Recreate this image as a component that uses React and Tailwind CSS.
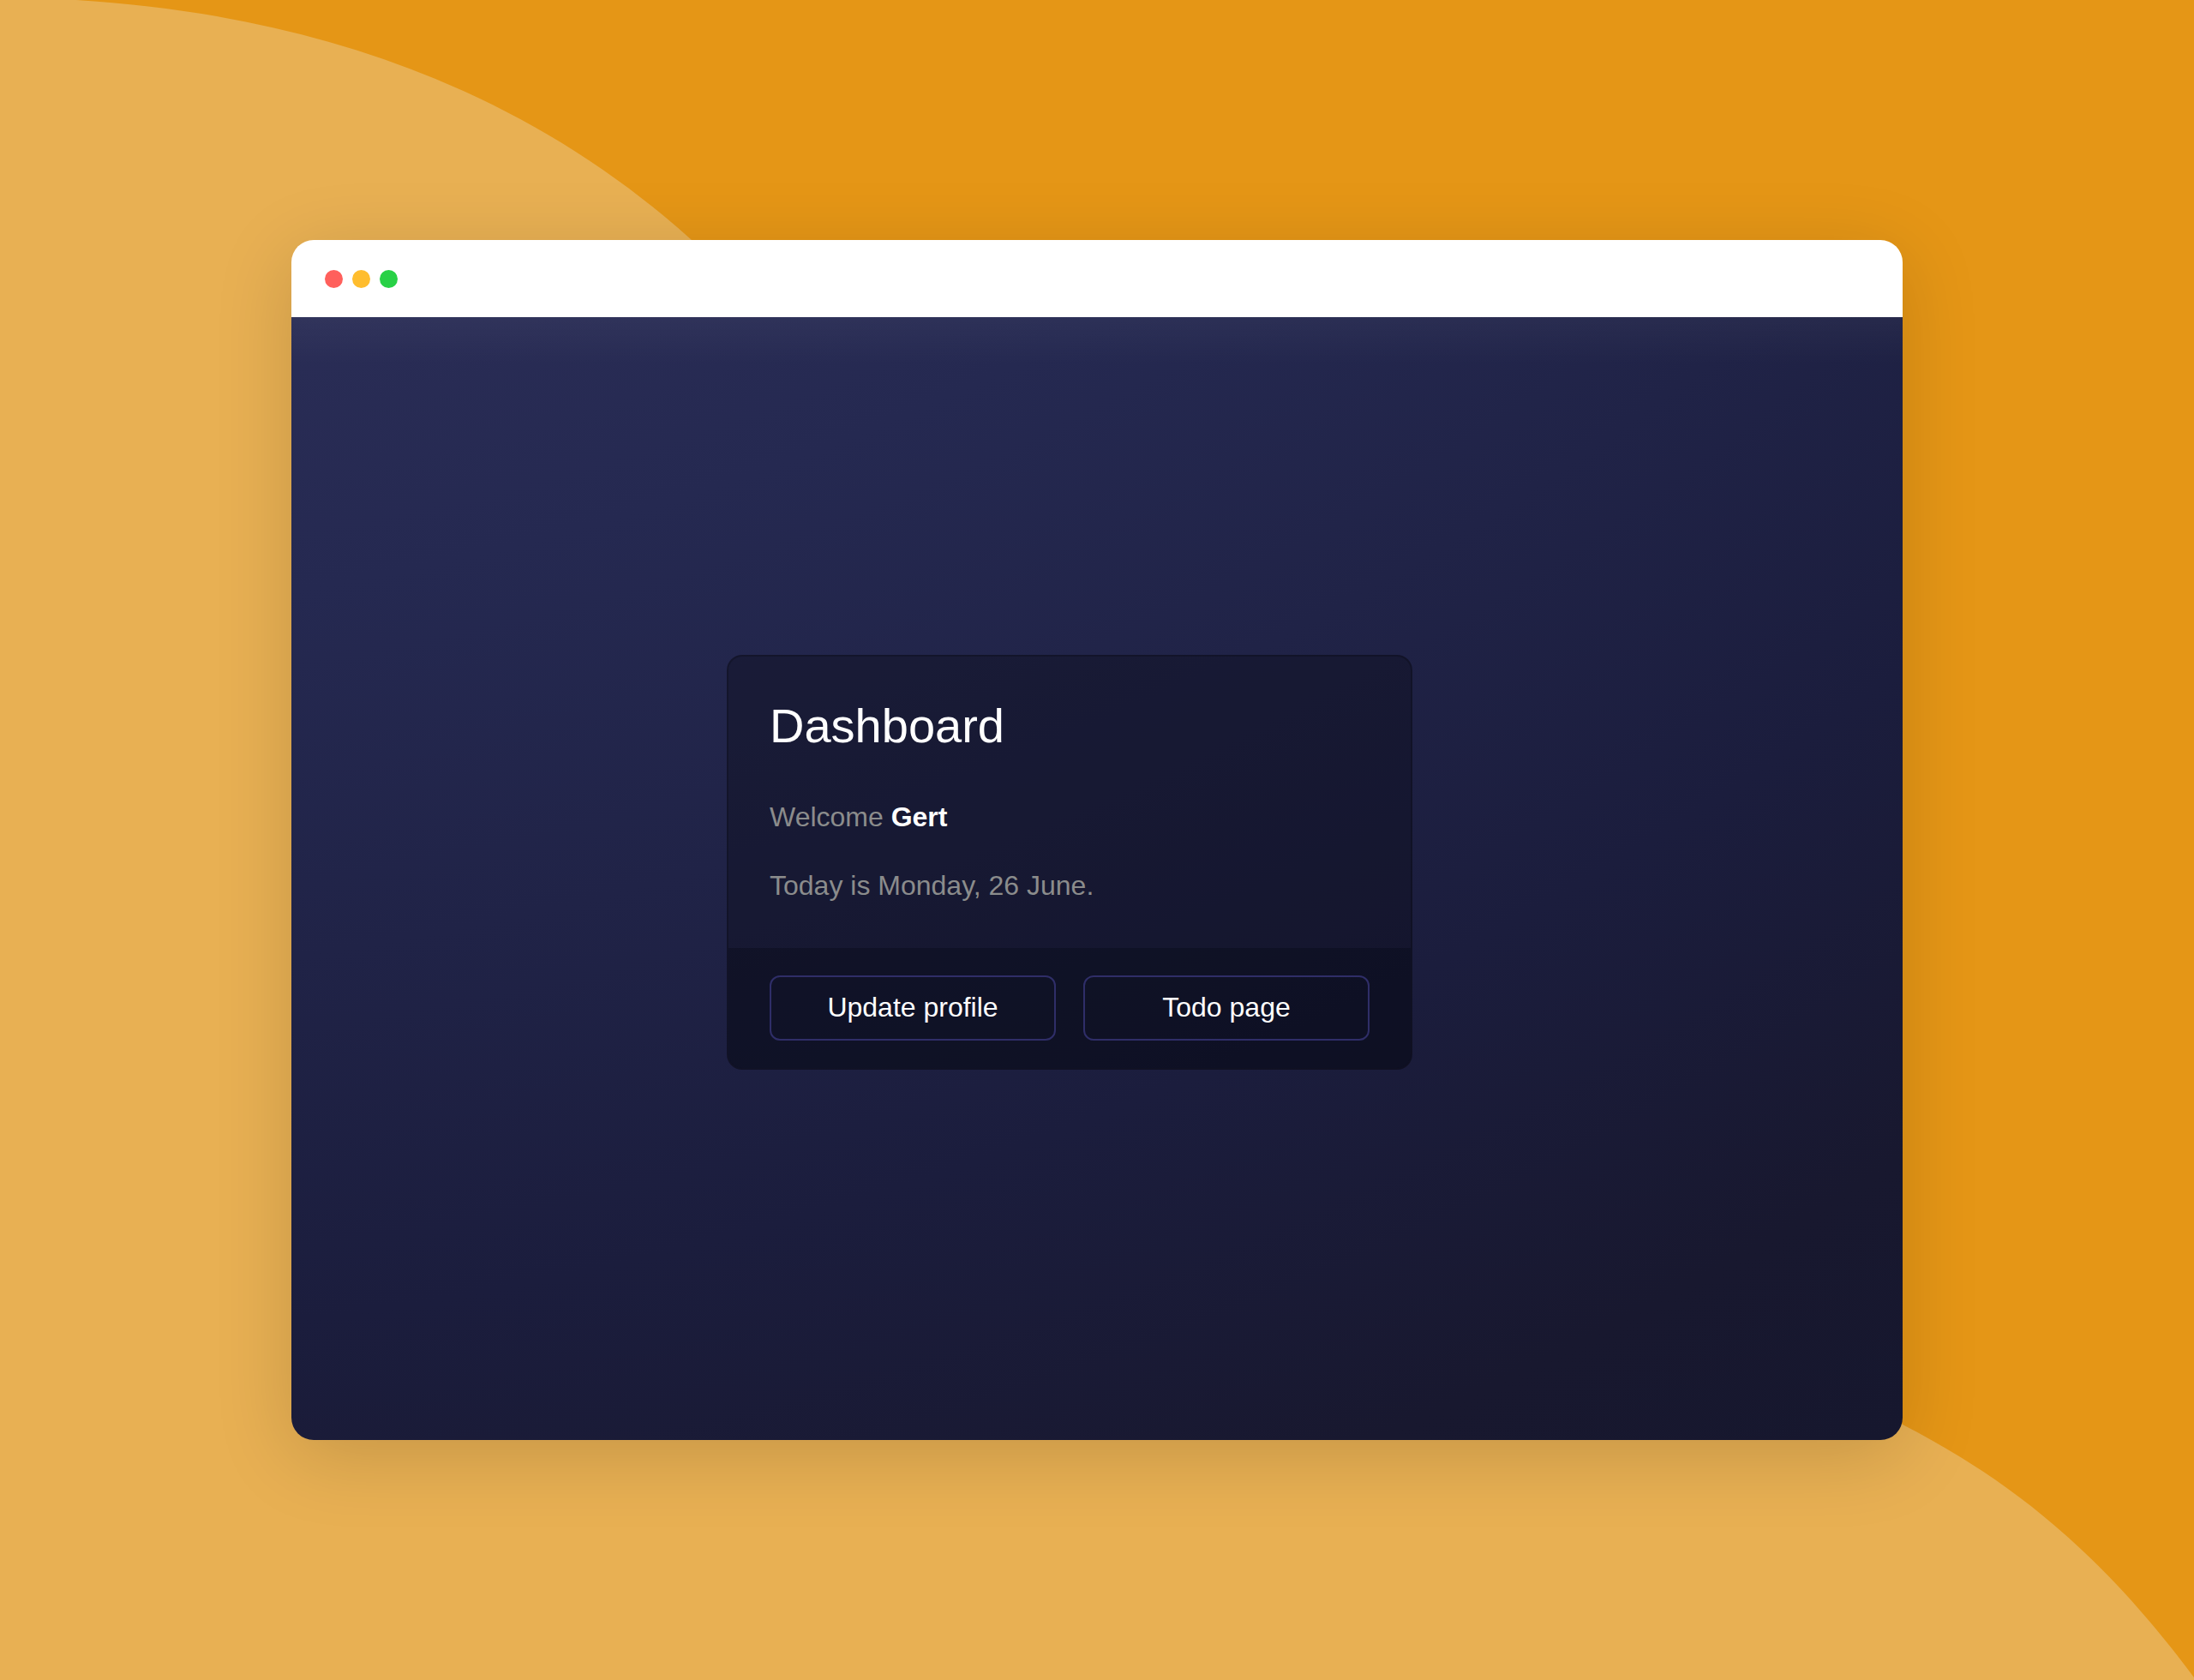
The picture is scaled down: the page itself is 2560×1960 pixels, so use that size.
const dots = ["bg-[#ff605c]", "bg-[#ffbd2e]", "bg-[#28d146]"];

function Backdrop() {
  return (
    <svg
      className="absolute inset-0 h-full w-full"
      viewBox="0 0 2560 1960"
      preserveAspectRatio="none"
      aria-hidden="true"
    >
      <path
        fill="#e8b053"
        d="M0 -3C30 -3 60 -2 89 0C349 16 602 95 807 280L2220 1662C2340 1724 2448 1806 2560 1957V1960H0Z"
      />
    </svg>
  );
}

function OutlineButton({ children }) {
  return (
    <button
      type="button"
      className="flex-1 cursor-pointer rounded-xl border-2 border-[#2f2e68] pt-[11px] pb-[13px] text-[32px] leading-[48px] text-white"
    >
      {children}
    </button>
  );
}

function DashboardCard() {
  return (
    <section className="w-[800px] max-w-full overflow-hidden rounded-[18px] border-2 border-black/20 bg-[#0a0a12]/35">
      <div className="px-12 pt-12 pb-[49px]">
        <h1 className="text-[56px] leading-[66px] text-white">Dashboard</h1>
        <p className="mt-[49px] text-[32px] leading-[48px] text-[#8b8c8c]">
          Welcome <strong className="font-bold text-white">Gert</strong>
        </p>
        <p className="mt-8 text-[32px] leading-[48px] text-[#8b8c8c]">Today is Monday, 26 June.</p>
      </div>
      <div className="flex gap-8 bg-[#03050f]/30 px-12 py-8">
        <OutlineButton>Update profile</OutlineButton>
        <OutlineButton>Todo page</OutlineButton>
      </div>
    </section>
  );
}

export default function App() {
  return (
    <div className="relative flex min-h-screen overflow-hidden bg-[#e59616] px-[340px] py-[280px] font-['Liberation_Sans',Arial,sans-serif]">
      <Backdrop />
      <div className="relative flex flex-1 flex-col overflow-hidden rounded-[26px] shadow-[0_18px_90px_rgba(0,0,0,0.15)]">
        <header className="flex h-[90px] items-center gap-[11px] bg-white px-[39px]">
          {dots.map((color) => (
            <span key={color} className={"size-[21px] rounded-full " + color} />
          ))}
        </header>
        <main className="flex flex-1 items-center justify-center bg-[linear-gradient(to_bottom,rgba(255,255,255,0.035),rgba(255,255,255,0)_56px),radial-gradient(circle_farthest-corner_at_-26%_-209%,#2a2d56_59%,#252951_66%,#1b1d3d_84%,#18182f_94%,#16172e_100%)] pr-16 pb-[38px]">
          <DashboardCard />
        </main>
      </div>
    </div>
  );
}
